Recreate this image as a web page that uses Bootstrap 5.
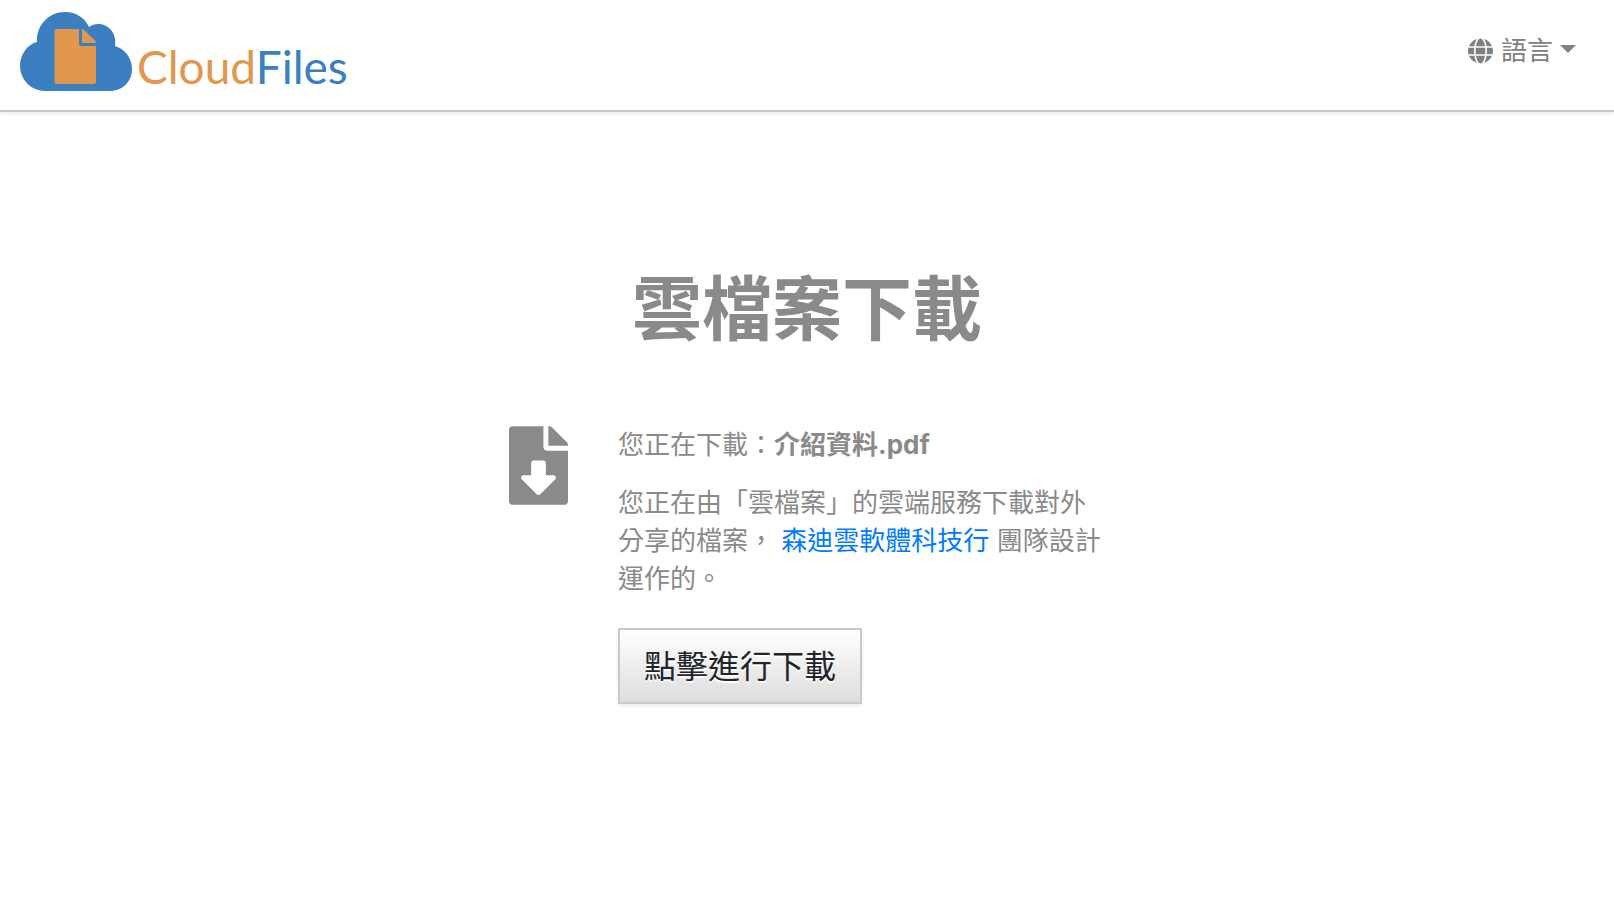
<!DOCTYPE html>
<html lang="zh-Hant">
<head>
<meta charset="utf-8">
<meta name="viewport" content="width=device-width, initial-scale=1">
<title>雲檔案下載</title>
<link href="https://cdn.jsdelivr.net/npm/bootstrap@5.3.0/dist/css/bootstrap.min.css" rel="stylesheet">
<style>
body { font-family: Inter, "Noto Sans CJK TC", sans-serif; font-size: 26px; line-height: 38px; color: #8a8a8a; }
.site-header { min-height: 112px; padding: 0 38px 0 20px; border-bottom: 2px solid #c8c8c8; box-shadow: 0 2px 4px rgba(0,0,0,.08); }
.brand-cloud { width: 113px; height: 80px; }
.brand-name { font-family: Lato, sans-serif; font-size: 46px; line-height: 54px; color: #e0984f; margin-left: 4px; padding-top: 28px; }
.brand-name span { color: #3b7fc1; }
.lang-btn { font-size: 26px; line-height: 38px; color: #808080; }
.lang-btn::after { margin-left: 7px; margin-bottom: 4px; border-width: 8px 8px 0; }
.lang-btn svg { width: 25px; height: 26px; }
.download-main { max-width: 620px; padding: 154px 12px 24px; }
.download-title { font-size: 70px; line-height: 88px; font-weight: 700; margin-bottom: 72px; }
.file-icon { width: 59px; height: 79px; }
.download-body { gap: 50px; }
.download-body p { margin-bottom: 20px; }
.download-body a { color: #007bff; }
.download-btn { font-size: 32px; line-height: 48px; padding: 13px 24px 11px; margin-top: 10px; color: #212529; border: 2px solid #c8c8c8; border-radius: 0; background: linear-gradient(#fff, #ddd); text-shadow: 0 2px 0 #fff; box-shadow: 0 2px 4px rgba(0,0,0,.08); }
.download-btn:hover { color: #212529; border-color: #aaa; }
</style>
</head>
<body>
<header class="site-header d-flex align-items-start justify-content-between">
  <a href="#" class="d-flex text-decoration-none pt-2 mt-1" aria-label="CloudFiles">
    <svg class="brand-cloud" viewBox="20 12 113 80" aria-hidden="true">
      <path fill="#3b7fc1" d="M45 91A25 25 0 0 1 20 66C20 54 28 44 37 42C36 25 49 12 65 12C76 12 85 18 89 27C99 19 118 27 115 46C125 49 132 58 132 69C132 82 122 91 110 91Z"/>
      <path fill="#e0984f" d="M56.500 29H79V43.500Q79 46 81.500 46H96V82Q96 84 94 84H56.500Q54.500 84 54.500 82V31Q54.500 29 56.500 29ZM82 29Q83 29 84 30L95 40.500Q96 41.500 96 43H82Z"/>
    </svg>
    <div class="brand-name">Cloud<span>Files</span></div>
  </a>
  <div class="dropdown mt-4 pt-2">
    <button type="button" class="btn lang-btn dropdown-toggle d-flex align-items-center border-0 p-0" data-bs-toggle="dropdown" aria-expanded="false">
      <svg class="me-2" viewBox="0 0 496 512" fill="currentColor" aria-hidden="true"><path d="M336.500 160C322 70.700 287.800 8 248 8s-74 62.700-88.500 152h177zM152 256c0 22.200 1.200 43.500 3.300 64h185.300c2.100-20.500 3.300-41.800 3.300-64s-1.200-43.500-3.300-64H155.300c-2.100 20.500-3.300 41.800-3.300 64zm324.700-96c-28.600-67.900-86.500-120.400-158-141.600 24.400 33.800 41.200 84.700 50 141.600h108zM177.200 18.400C105.800 39.600 47.800 92.100 19.300 160h108c8.700-56.900 25.500-107.800 49.900-141.600zM487.400 192H372.700c2.100 21 3.300 42.500 3.300 64s-1.200 43-3.300 64h114.600c5.500-20.500 8.600-41.800 8.600-64s-3.100-43.500-8.500-64zM120 256c0-21.500 1.200-43 3.300-64H8.600C3.200 212.500 0 233.800 0 256s3.200 43.500 8.600 64h114.600c-2-21-3.200-42.500-3.200-64zm39.500 96c14.500 89.300 48.700 152 88.500 152s74-62.700 88.500-152h-177zm159.300 141.600c71.400-21.200 129.400-73.700 158-141.600h-108c-8.800 56.900-25.600 107.800-50 141.600zM19.300 352c28.600 67.900 86.500 120.400 158 141.600-24.400-33.800-41.200-84.700-50-141.600h-108z"/></svg>語言</button>
  </div>
</header>
<main class="download-main mx-auto">
  <h1 class="download-title text-center">雲檔案下載</h1>
  <div class="download-body d-flex align-items-start">
    <svg class="file-icon flex-shrink-0" viewBox="0 0 384 512" fill="currentColor" aria-hidden="true"><path d="M224 136V0H24C10.700 0 0 10.700 0 24v464c0 13.300 10.700 24 24 24h336c13.300 0 24-10.700 24-24V160H248c-13.200 0-24-10.800-24-24zm76.450 211.360l-96.420 95.700c-6.650 6.610-17.390 6.610-24.040 0l-96.420-95.700C73.420 337.290 80.540 320 94.820 320H144v-80c0-8.840 7.160-16 16-16h64c8.840 0 16 7.160 16 16v80h49.180c14.280 0 21.400 17.290 11.270 27.360zM377 105L279.100 7c-4.500-4.500-10.600-7-17-7H256v128h128v-6.100c0-6.300-2.500-12.400-7-16.900z"/></svg>
    <div>
      <p>您正在下載：<strong>介紹資料.pdf</strong></p>
      <p>您正在由「雲檔案」的雲端服務下載對外分享的檔案， <a href="#" class="text-decoration-none">森迪雲軟體科技行</a> 團隊設計運作的。</p>
      <button type="button" class="btn download-btn">點擊進行下載</button>
    </div>
  </div>
</main>
<script src="https://cdn.jsdelivr.net/npm/bootstrap@5.3.0/dist/js/bootstrap.bundle.min.js"></script>
</body>
</html>
